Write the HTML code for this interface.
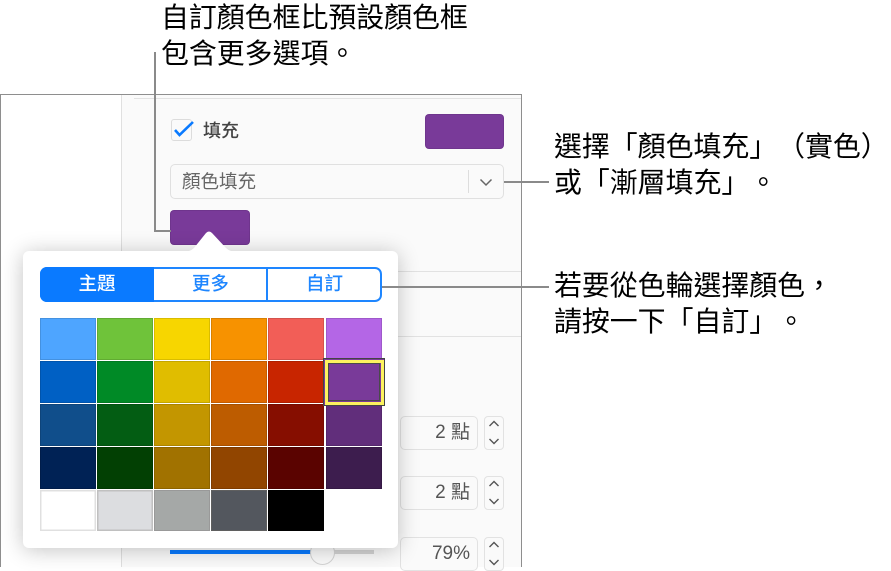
<!DOCTYPE html>
<html><head><meta charset="utf-8">
<style>
html,body{margin:0;padding:0;background:#fff}
body{width:891px;height:567px;position:relative;overflow:hidden;font-family:"Liberation Sans","Noto Sans CJK TC",sans-serif;text-spacing-trim:space-all}
div{position:absolute;box-sizing:border-box}
.t{font-size:27.900px;line-height:36px;color:#000;white-space:nowrap}
.l{background:#8a8a8a}
.inp{left:400px;width:78px;height:34px;border:1.5px solid #e2e2e2;border-radius:5px;background:#fafafa;text-align:right;padding-right:7px;font-size:19px;line-height:31px;color:#555}
.st{left:484px;width:20px;height:34px;border:1.5px solid #e2e2e2;border-radius:4px;background:#fafafa}
.s{width:56px;box-shadow:inset 0 0 0 1px rgba(0,0,0,.12)}
.seg{top:267px;height:35px;text-align:center;font-size:18.500px;line-height:34px;font-weight:500}
</style></head><body>
<div style="left:0;top:94px;width:522px;height:473px;border:1px solid #8e8e8e;border-bottom:0;background:#fff"></div>
<div style="left:121px;top:95px;width:400px;height:472px;background:#fafafa;border-left:1px solid #e0e0e0"></div>
<div style="left:134px;top:98px;width:387px;height:1px;background:#e2e2e2"></div>
<div style="left:122px;top:271px;width:399px;height:1px;background:#e2e2e2"></div>
<div style="left:122px;top:336px;width:399px;height:1px;background:#e2e2e2"></div>

<div style="left:171px;top:119px;width:21px;height:22px;border:1.5px solid #dcdcdc;border-radius:3px;background:#fafafa"></div>
<svg style="position:absolute;left:170px;top:118px" width="26" height="24"><path d="M5 12L9.500 17L23 4" fill="none" stroke="#0a7aff" stroke-width="2.600"/></svg>
<div style="left:203px;top:119px;font-size:18px;line-height:25px;font-weight:500;color:#444;white-space:nowrap">填充</div>
<div style="left:425px;top:114px;width:79px;height:35px;border-radius:4px;background:#793a99;box-shadow:inset 0 0 0 1px rgba(0,0,0,.08)"></div>
<div style="left:170px;top:164px;width:334px;height:35px;border:1.5px solid #e0e0e0;border-radius:5px;background:#fafafa"></div>
<div style="left:182px;top:169px;font-size:18.500px;line-height:25px;color:#666;white-space:nowrap">顏色填充</div>
<div style="left:468px;top:170px;width:1px;height:23px;background:#ddd"></div>
<svg style="position:absolute;left:478px;top:176px" width="16" height="12"><path d="M2.500 3.500L8 9L13.500 3.500" fill="none" stroke="#666" stroke-width="1.500"/></svg>
<div style="left:170px;top:210px;width:80px;height:35px;border-radius:4px;background:#793a99;box-shadow:inset 0 0 0 1px rgba(0,0,0,.08)"></div>

<div class="inp" style="top:416px">2 點</div>
<div class="st" style="top:416px"></div>
<div class="inp" style="top:476px">2 點</div>
<div class="st" style="top:476px"></div>
<div class="inp" style="top:537px">79%</div>
<div class="st" style="top:537px"></div>
<svg style="position:absolute;left:484px;top:416px" width="20" height="151"><g fill="none" stroke="#555" stroke-width="1.400"><path d="M5.500 10L10 5.500L14.500 10M5.500 23L10 27.500L14.500 23"/><path d="M5.500 70L10 65.500L14.500 70M5.500 83L10 87.500L14.500 83"/><path d="M5.500 131L10 126.500L14.500 131M5.500 144L10 148.500L14.500 144"/></g></svg>

<div style="left:170px;top:550px;width:145px;height:4px;background:#0a7aff"></div>
<div style="left:330px;top:550px;width:44px;height:4px;background:#d4d4d4"></div>
<div style="left:310px;top:540px;width:25px;height:25px;border-radius:50%;background:#fafafa;border:1.5px solid #d4d4d4"></div>

<!-- popover -->
<div style="left:23px;top:251px;width:375px;height:297px;background:#fff;border-radius:6px;box-shadow:0 2px 22px rgba(0,0,0,.24)"></div>
<svg style="position:absolute;left:180px;top:226px" width="60" height="30"><path d="M2 26Q10 26 14 22L26 7Q29 4 32 7L46 22Q50 26 58 26V30H2Z" fill="#fff"/></svg>

<div style="left:40px;top:267px;width:342px;height:35px;border:2px solid #1e86ff;border-radius:7px;background:#fff"></div>
<div style="left:40px;top:267px;width:114px;height:35px;background:#0a7aff;border-radius:7px 0 0 7px"></div>
<div class="seg" style="left:40px;width:114px;color:#fff">主題</div>
<div class="seg" style="left:154px;width:113px;color:#1e86ff">更多</div>
<div style="left:266px;top:268px;width:1.500px;height:33px;background:#1e86ff"></div>
<div class="seg" style="left:267px;width:115px;color:#1e86ff">自訂</div>

<div class="s" style="left:40px;top:318px;height:42px;background:#4ea5ff"></div>
<div class="s" style="left:97px;top:318px;height:42px;background:#6fc33a"></div>
<div class="s" style="left:154px;top:318px;height:42px;background:#f7d600"></div>
<div class="s" style="left:211px;top:318px;height:42px;background:#f79200"></div>
<div class="s" style="left:268px;top:318px;height:42px;background:#f25e57"></div>
<div class="s" style="left:326px;top:318px;height:42px;background:#b466e6"></div>

<div class="s" style="left:40px;top:361px;height:42px;background:#0060c4"></div>
<div class="s" style="left:97px;top:361px;height:42px;background:#008a26"></div>
<div class="s" style="left:154px;top:361px;height:42px;background:#e0bd00"></div>
<div class="s" style="left:211px;top:361px;height:42px;background:#e06900"></div>
<div class="s" style="left:268px;top:361px;height:42px;background:#c82500"></div>

<div class="s" style="left:40px;top:404px;height:42px;background:#104e8b"></div>
<div class="s" style="left:97px;top:404px;height:42px;background:#035d13"></div>
<div class="s" style="left:154px;top:404px;height:42px;background:#c39600"></div>
<div class="s" style="left:211px;top:404px;height:42px;background:#bd5c00"></div>
<div class="s" style="left:268px;top:404px;height:42px;background:#860e00"></div>
<div class="s" style="left:326px;top:404px;height:42px;background:#612e7b"></div>

<div class="s" style="left:40px;top:447px;height:42px;background:#002255"></div>
<div class="s" style="left:97px;top:447px;height:42px;background:#024003"></div>
<div class="s" style="left:154px;top:447px;height:42px;background:#a17200"></div>
<div class="s" style="left:211px;top:447px;height:42px;background:#914500"></div>
<div class="s" style="left:268px;top:447px;height:42px;background:#5a0300"></div>
<div class="s" style="left:326px;top:447px;height:42px;background:#3d1d4e"></div>

<div class="s" style="left:40px;top:490px;height:41px;background:#fff;box-shadow:inset 0 0 0 1.500px #e0e0e0"></div>
<div class="s" style="left:97px;top:490px;height:41px;background:#dcdde0;box-shadow:inset 0 0 0 1.500px #c0c0c0"></div>
<div class="s" style="left:154px;top:490px;height:41px;background:#a5a8a7;box-shadow:inset 0 0 0 1px #999"></div>
<div class="s" style="left:211px;top:490px;height:41px;background:#53575e;box-shadow:inset 0 0 0 1px #5f5f5f"></div>
<div class="s" style="left:268px;top:490px;height:41px;background:#000"></div>

<div style="left:323px;top:358px;width:62px;height:48px;background:#793a99;border:1.500px solid #444"></div>
<div style="left:324.500px;top:359.500px;width:59px;height:45px;border:3.500px solid #fdf25f"></div>
<div style="left:328px;top:363px;width:52px;height:38px;border:1.500px solid #4a4a4a"></div>

<!-- leader lines -->
<div class="l" style="left:154px;top:52px;width:2px;height:180px"></div>
<div class="l" style="left:154px;top:230px;width:17px;height:2px"></div>
<div class="l" style="left:504px;top:181px;width:45px;height:2px"></div>
<div class="l" style="left:382px;top:286px;width:167px;height:2px"></div>

<!-- callouts -->
<div class="t" style="left:161px;top:0px">自訂顏色框比預設顏色框<br>包含更多選項。</div>
<div class="t" style="left:554px;top:129px">選擇「顏色填充」（實色）<br>或「漸層填充」。</div>
<div class="t" style="left:554px;top:268px">若要從色輪選擇顏色，<br>請按一下「自訂」。</div>
</body></html>
